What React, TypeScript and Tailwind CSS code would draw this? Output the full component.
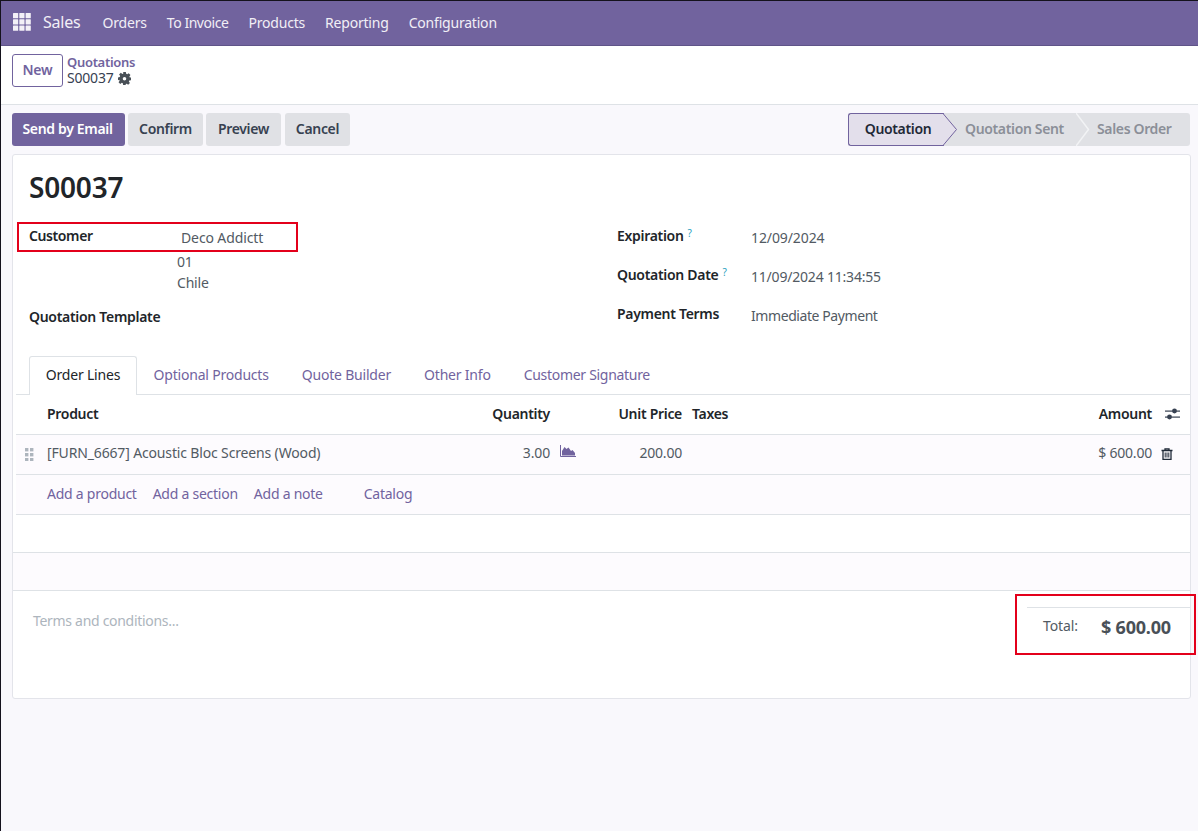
import React from "react";

const Q = () => <sup className="text-[#2a9fc0] text-[10px] font-normal ml-[4px] relative top-[-4px]">?</sup>;

const Apps = () => (
  <svg width="18" height="18" viewBox="0 0 18 18" fill="#f3f0f7">
    {[0, 6.3, 12.6].map((x) => [0, 6.3, 12.6].map((y) => <rect key={`${x}-${y}`} x={x} y={y} width="5.2" height="5.2" rx="0.5" />))}
  </svg>
);

const Gear = () => (
  <svg width="13" height="13" viewBox="0 0 24 24" fill="#495057">
    <path fillRule="evenodd" d="M9.500 0h5l.6 3.400 1.900.8L19.800 2.200 23 5.400l-2 2.800.8 1.900L24 10v5l-3.200.6-.8 1.900 2 2.800-3.200 3.200-2.800-2-1.900.8L14.500 24h-5l-.6-3.200-1.900-.8-2.800 2L1 18.800l2-2.800-.8-1.900L0 15v-5l3.200-.6.8-1.900-2-2.800L5.200 1.500 8 3.500l1.900-.8zM12 9a3.300 3.300 0 1 0 0 6.600A3.300 3.300 0 0 0 12 9z" />
  </svg>
);

const Chart = () => (
  <svg width="16" height="12" viewBox="0 0 16 12" className="text-[#71639e]">
    <path d="M.5 0v11.500H16" fill="none" stroke="currentColor" />
    <path d="M2 10.500V6l2.500-4L6.500 4 8.500 2.500l2.500 3.500 1.500-1L15 8v2.500z" fill="currentColor" />
  </svg>
);

const Sliders = () => (
  <svg width="15" height="12" viewBox="0 0 15 12" fill="#374151">
    <rect x="0" y="2.500" width="15" height="1.200" />
    <rect x="0" y="8.500" width="15" height="1.200" />
    <circle cx="9.500" cy="3" r="2.400" />
    <circle cx="4.500" cy="9" r="2.400" />
  </svg>
);

const Trash = () => (
  <svg width="12" height="12" viewBox="0 0 12 12" fill="none" stroke="#1f2937" strokeWidth="1.300">
    <path d="M.5 2.500h11M4 2.500V.8h4v1.700M2 2.500v9h8v-9" />
    <path d="M4.200 4.500v5M6 4.500v5M7.800 4.500v5" strokeWidth="1" />
  </svg>
);

const Grip = () => (
  <svg width="9" height="13" viewBox="0 0 9 13" fill="#adb5bd">
    {[0, 5].map((x) => [0, 5, 10].map((y) => <rect key={`${x}-${y}`} x={x} y={y} width="3.400" height="3.400" />))}
  </svg>
);

const Field = ({ label, q, value, valueClass }: { label: string; q?: boolean; value: string; valueClass: string }) => (
  <div className="flex h-[39px] items-start">
    <div className="w-[134px] font-semibold text-[#212529] leading-[20px] tracking-[-0.3px]">{label}{q && <Q />}</div>
    <div className={`text-[#525a63] leading-[20px] pt-[2px] ${valueClass}`}>{value}</div>
  </div>
);

const rowGrid = "grid grid-cols-[33px_501px_132px_470px_1fr] items-center";

export default function App() {
  return (
    <div className="w-[1198px] h-[831px] overflow-hidden bg-[#f9f8fc] border-l border-t border-[#14121c] text-[14px] text-[#525a63] relative [font-family:'Noto_Sans',sans-serif] tracking-[-0.2px]">
      <nav className="h-[45px] pb-[2px] bg-[#71639e] border-b border-[#5f5488] flex items-center text-[#f1eff6] pl-[12px]">
        <Apps />
        <span className="ml-[12px] text-[16px]">Sales</span>
        <div className="flex ml-[22px]">
          <span className="mr-[20px]">Orders</span>
          <span className="mr-[20px] tracking-[-0.45px]">To Invoice</span>
          <span className="mr-[20px]">Products</span>
          <span className="mr-[20px]">Reporting</span>
          <span>Configuration</span>
        </div>
      </nav>

      <div className="h-[59px] bg-white border-b border-[#dee2e6] flex pl-[11px] pt-[8px]">
        <button className="h-[33px] w-[51px] pb-[2px] border border-[#71639e] rounded-[3px] text-[#71639e] font-semibold">New</button>
        <div className="ml-[4px] leading-[16px]">
          <div className="text-[#71639e] font-semibold text-[13px] tracking-[-0.3px]">Quotations</div>
          <div className="flex items-center gap-[4px] text-[#374151]">S00037 <Gear /></div>
        </div>
      </div>

      <div className="flex justify-between pl-[11px] pr-[8px] pt-[8px] h-[49px]">
        <div className="flex gap-[3px] font-semibold tracking-[-0.33px]">
          <button className="h-[33px] w-[113px] pb-[2px] pr-[2px] bg-[#71639e] rounded-[3px] text-white">Send by Email</button>
          <button className="h-[33px] w-[75px] pb-[2px] bg-[#e0e1e5] rounded-[3px] text-[#374151]">Confirm</button>
          <button className="h-[33px] w-[75px] pb-[2px] bg-[#e0e1e5] rounded-[3px] text-[#374151]">Preview</button>
          <button className="h-[33px] w-[65px] ml-[1px] pb-[2px] bg-[#e0e1e5] rounded-[3px] text-[#374151]">Cancel</button>
        </div>
        <div className="flex h-[33px] w-[342px] bg-[#e0e1e5] rounded-[3px] font-semibold relative tracking-[-0.35px]">
          <div className="w-[96px] flex items-center justify-center bg-[#e3dfeb] text-[#1f2937] border border-r-0 border-[#71639e] rounded-l-[3px] relative pb-[2px] pl-[3px] shrink-0">
            Quotation
            <svg width="15" height="33" viewBox="0 0 15 33" className="absolute left-[94px] top-[-1px]">
              <path d="M0 .500L13.500 16.500 0 32.500" fill="#e3dfeb" stroke="#71639e" />
            </svg>
          </div>
          <div className="w-[132px] flex items-center pl-[21px] text-[#8b8f98] pb-[2px] shrink-0">Quotation Sent</div>
          <div className="flex-1 flex items-center pl-[21px] text-[#8b8f98] pb-[2px]">Sales Order</div>
          <svg width="14" height="33" viewBox="0 0 14 33" className="absolute left-[228px] top-0">
            <path d="M0 0L12.500 16.500 0 33" fill="none" stroke="#f2f3f5" strokeWidth="1.500" />
          </svg>
        </div>
      </div>

      <main className="ml-[11px] mr-[7px] h-[545px] bg-white border border-[#e3e4ea] rounded-[3px] relative">
        <div className="pl-[16px] pt-[13px] h-[56px]">
          <h1 className="text-[28px] font-semibold text-[#212529] leading-[38px] tracking-[-0.2px]">S00037</h1>
        </div>

        <div className="flex h-[145px] pt-[15px]">
          <div className="w-[588px] pl-[16px]">
            <div className="flex h-[25px]">
              <div className="w-[148px] font-semibold text-[#212529] leading-[20px] tracking-[-0.4px]">Customer</div>
              <div className="pl-[4px] pt-[2px] leading-[20px] tracking-[-0.12px]">Deco Addictt</div>
            </div>
            <div className="pl-[148px] leading-[21px]">01<br />Chile</div>
            <div className="font-semibold text-[#212529] leading-[20px] mt-[14px] tracking-[-0.3px]">Quotation Template</div>
          </div>
          <div className="pl-[16px] flex-1">
            <Field label="Expiration" q value="12/09/2024" valueClass="tracking-[-0.1px]" />
            <Field label="Quotation Date" q value="11/09/2024 11:34:55" valueClass="tracking-[-0.2px]" />
            <Field label="Payment Terms" value="Immediate Payment" valueClass="tracking-[-0.42px]" />
          </div>
        </div>

        <div className="flex h-[39px] ml-[3px] border-b border-[#dee2e6] pl-[13px]">
          <div className="h-[39px] w-[108px] pb-[4px] flex items-center justify-center bg-white border border-b-0 border-[#dee2e6] rounded-t-[3px] text-[#212529]">Order Lines</div>
          {["Optional Products", "Quote Builder", "Other Info"].map((t) => (
            <div key={t} className="h-[38px] pb-[2px] px-[16.5px] flex items-center text-[#71639e]">{t}</div>
          ))}
          <div className="h-[38px] pb-[2px] px-[16.5px] flex items-center text-[#71639e] tracking-[-0.3px]">Customer Signature</div>
        </div>

        <div className="ml-[3px]">
          <div className={`${rowGrid} h-[40px] pb-[2px] border-b border-[#dee2e6] font-semibold text-[#212529] tracking-[-0.3px]`}>
            <div />
            <div className="-ml-[2px]">
              <div className="flex justify-between"><span>Product</span><span>Quantity</span></div>
            </div>
            <div className="text-right">Unit Price</div>
            <div className="pl-[10px] flex justify-between"><span>Taxes</span><span>Amount</span></div>
            <div className="pl-[13px]"><Sliders /></div>
          </div>
          <div className={`${rowGrid} h-[40px] border-b border-[#dee2e6] bg-[#fdfbfe]`}>
            <div className="pl-[9px]"><Grip /></div>
            <div className="flex justify-between relative -ml-[2px] pb-[4px] tracking-[-0.15px]">
              <span>[FURN_6667] Acoustic Bloc Screens (Wood)</span>
              <span>3.00</span>
              <span className="absolute left-[513px] top-[3px]"><Chart /></span>
            </div>
            <div className="text-right pb-[4px]">200.00</div>
            <div className="text-right pb-[4px]">$ 600.00</div>
            <div className="pl-[9px] pb-[2px]"><Trash /></div>
          </div>
          <div className="h-[40px] pb-[2px] border-b border-[#dee2e6] flex items-center pl-[31px] text-[#71639e] tracking-[-0.25px] bg-[#fdfbfe]">
            <span>Add a product</span>
            <span className="ml-[16px]">Add a section</span>
            <span className="ml-[16px]">Add a note</span>
            <span className="ml-[41px]">Catalog</span>
          </div>
        </div>
        <div className="h-[38px] border-b border-[#dee2e6] bg-white" />
        <div className="h-[38px] border-b border-[#dee2e6] bg-[#fdfbfe]" />

        <div className="flex justify-between h-[107px]">
          <div className="pl-[20px] pt-[19px] text-[#adb5bd] tracking-[-0.3px]">Terms and conditions...</div>
          <div className="w-[163px] mt-[16px]">
            <div className="border-t border-[#dee2e6] flex h-[40px] pt-[7px] pl-[16px]">
              <span className="w-[58px] leading-[22px] text-[#525a63] tracking-[-0.1px]">Total:</span>
              <span className="text-[18px] font-bold leading-[24px] text-[#495057] tracking-[-0.2px]">$ 600.00</span>
            </div>
          </div>
        </div>
      </main>

      <div className="absolute left-[16px] top-[221px] w-[281px] h-[30px] border-2 border-[#e3001b]" />
      <div className="absolute left-[1014px] top-[593px] w-[181px] h-[61px] border-2 border-[#e3001b]" />
    </div>
  );
}
